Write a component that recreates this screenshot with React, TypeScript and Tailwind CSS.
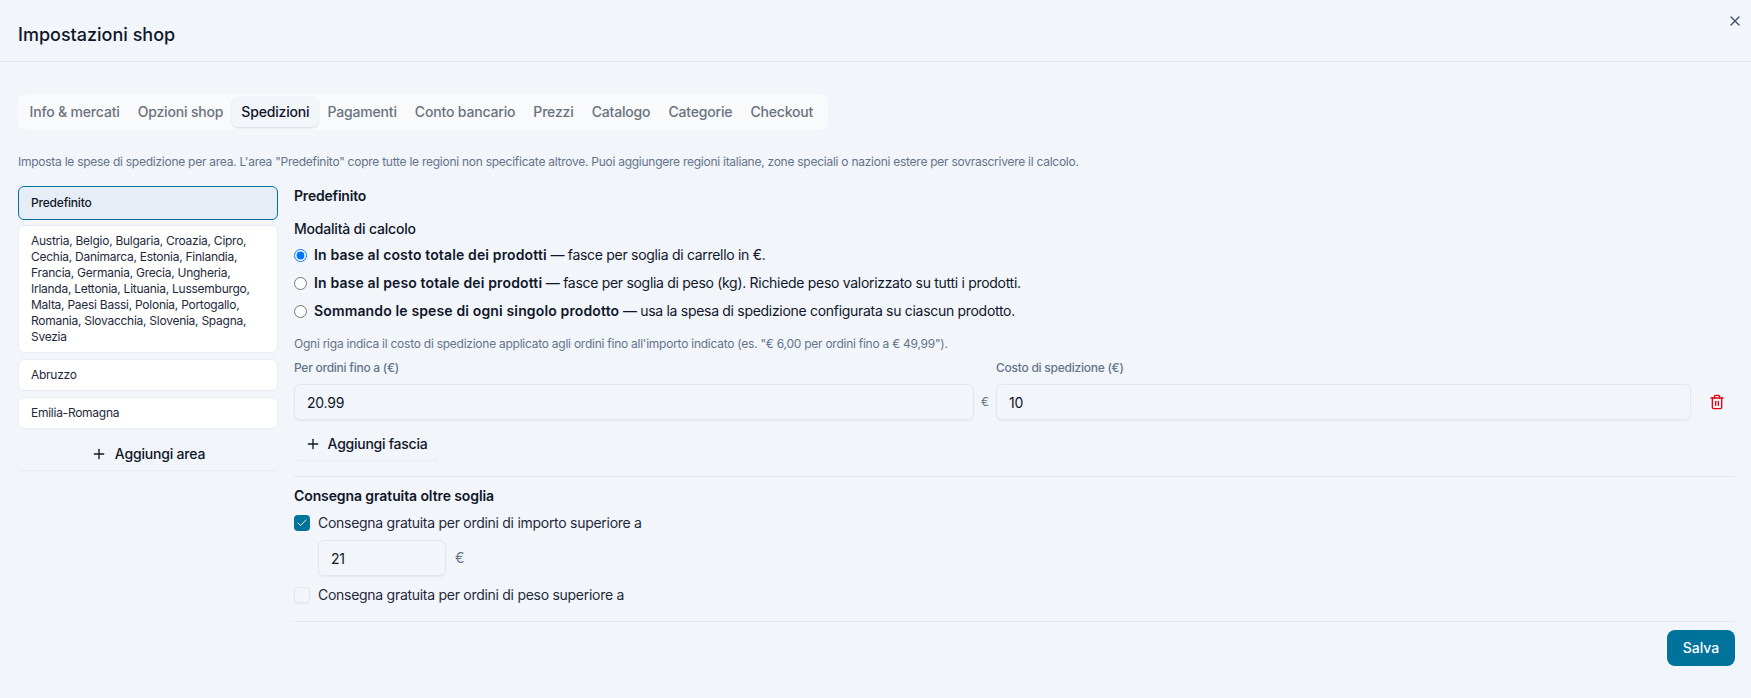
import { Check, Plus, Trash2, X } from "lucide-react";

const tabs = ["Info & mercati", "Opzioni shop", "Spedizioni", "Pagamenti", "Conto bancario", "Prezzi", "Catalogo", "Categorie", "Checkout"];

const modes = [
  { title: "In base al costo totale dei prodotti", rest: " — fasce per soglia di carrello in €.", on: true },
  { title: "In base al peso totale dei prodotti", rest: " — fasce per soglia di peso (kg). Richiede peso valorizzato su tutti i prodotti.", on: false },
  { title: "Sommando le spese di ogni singolo prodotto", rest: " — usa la spesa di spedizione configurata su ciascun prodotto.", on: false },
];

const areas = [
  "Austria, Belgio, Bulgaria, Croazia, Cipro, Cechia, Danimarca, Estonia, Finlandia, Francia, Germania, Grecia, Ungheria, Irlanda, Lettonia, Lituania, Lussemburgo, Malta, Paesi Bassi, Polonia, Portogallo, Romania, Slovacchia, Slovenia, Spagna, Svezia",
  "Abruzzo",
  "Emilia-Romagna",
];

const inputClass = "h-9 rounded-md border border-[#e2e8f0] bg-[#f2f5fa] px-3 text-sm tracking-[-0.2px] text-[#0f172a] shadow-xs outline-none";

export default function App() {
  return (
    <div className="relative h-[698px] overflow-hidden bg-[#f2f5fa] font-['Inter',sans-serif] text-[#0f172a]">
      {/* Header */}
      <div className="flex h-[62px] items-center border-b border-[#e4e9f1] px-[18px] pt-[8px]">
        <h1 className="text-lg font-medium">Impostazioni shop</h1>
      </div>
      <button className="absolute top-[13px] right-[8px] text-[#475569]">
        <X size={16} />
      </button>

      <div className="pt-[32px] pr-[16px] pl-[18px]">
        {/* Tabs */}
        <div className="flex h-9 w-fit items-center rounded-lg bg-[#f8fafc] pr-[6px] pl-[2.5px]">
          {tabs.map((t) => (
            <div
              key={t}
              className={
                t === "Spedizioni"
                  ? "flex h-[30px] items-center rounded-md bg-[#f2f5fa] px-[9px] text-sm font-medium tracking-[-0.17px] text-[#0f172a] shadow-sm"
                  : "flex h-[30px] items-center px-[9px] text-sm font-medium tracking-[-0.17px] text-[#6b7280]"
              }
            >
              {t}
            </div>
          ))}
        </div>

        <p className="mt-[24px] text-xs leading-4 tracking-[-0.26px] text-[#64748b]">
          Imposta le spese di spedizione per area. L'area "Predefinito" copre tutte le regioni non specificate altrove. Puoi aggiungere regioni italiane, zone speciali o nazioni estere per sovrascrivere il calcolo.
        </p>

        <div className="mt-[16px] flex gap-4">
          {/* Area list */}
          <div className="flex w-[260px] shrink-0 flex-col gap-[6px]">
            <div className="-mb-px flex h-[34px] items-center rounded-md border border-[#00739d] bg-[#e6edf6] px-3 text-xs font-medium tracking-[-0.2px]">Predefinito</div>
            {areas.map((a) => (
              <div key={a} className="rounded-md border border-[#e8edf3] bg-white px-3 py-[7px] text-xs leading-4 tracking-[-0.26px] text-[#1e293b]">
                {a}
              </div>
            ))}
            <button className="mt-[3px] flex h-[32px] items-center justify-center gap-2 rounded-md bg-[#f2f5fa] text-sm font-medium tracking-[-0.2px] shadow-xs">
              <Plus size={16} />
              Aggiungi area
            </button>
          </div>

          {/* Detail */}
          <div className="min-w-0 flex-1">
            <h2 className="text-sm leading-5 font-semibold tracking-[-0.2px]">Predefinito</h2>
            <p className="mt-[13px] text-sm leading-5 font-medium tracking-[-0.2px]">Modalità di calcolo</p>
            <div className="mt-[2px] flex flex-col">
              {modes.map((m) => (
                <label key={m.title} className="flex h-[28px] items-center gap-[7px] text-sm tracking-[-0.3px]">
                  <input type="radio" name="mode" defaultChecked={m.on} />
                  <span>
                    <b className="font-semibold tracking-[0.14px]">{m.title}</b>
                    {m.rest}
                  </span>
                </label>
              ))}
            </div>
            <p className="mt-[11px] text-xs leading-4 tracking-[-0.25px] text-[#64748b]">
              Ogni riga indica il costo di spedizione applicato agli ordini fino all'importo indicato (es. "€ 6,00 per ordini fino a € 49,99").
            </p>

            {/* Price bands */}
            <div className="mt-[8px] grid grid-cols-[702px_695px_44px] items-center gap-y-[8px]">
              <p className="text-xs leading-4 font-medium tracking-[-0.25px] text-[#64748b]">Per ordini fino a (€)</p>
              <p className="col-span-2 text-xs leading-4 font-medium tracking-[-0.25px] text-[#64748b]">Costo di spedizione (€)</p>
              <div className="flex items-center">
                <input className={`${inputClass} w-[680px]`} defaultValue="20.99" />
                <span className="w-[22px] text-center text-xs text-[#64748b]">€</span>
              </div>
              <input className={`${inputClass} w-full`} defaultValue="10" />
              <div className="flex justify-end pr-[10px] text-[#e7000b]">
                <Trash2 size={16} />
              </div>
            </div>

            <button className="mt-[8px] flex h-8 w-[144px] items-center justify-center gap-[7px] rounded-md bg-[#f2f5fa] text-sm font-medium tracking-[-0.25px] shadow-xs">
              <Plus size={16} />
              Aggiungi fascia
            </button>

            <div className="mt-[16px] border-t border-[#e4e9f1] pt-[9px]">
              <h3 className="text-sm leading-5 font-semibold tracking-[-0.1px]">Consegna gratuita oltre soglia</h3>
              <label className="mt-[7px] flex h-[20px] items-center gap-[8px] text-sm tracking-[-0.28px] text-[#1e293b]">
                <span className="flex size-4 items-center justify-center rounded-[4px] bg-[#00739d] text-white">
                  <Check size={12} />
                </span>
                Consegna gratuita per ordini di importo superiore a
              </label>
              <div className="mt-[7px] ml-[24px] flex items-center gap-[9px]">
                <input className={`${inputClass} w-[128px]`} defaultValue="21" />
                <span className="text-sm text-[#64748b]">€</span>
              </div>
              <label className="mt-[9px] flex h-[20px] items-center gap-[8px] text-sm tracking-[-0.28px] text-[#1e293b]">
                <span className="size-4 rounded-[4px] border border-[#e2e8f0] bg-[#f2f5fa] shadow-xs" />
                Consegna gratuita per ordini di peso superiore a
              </label>
            </div>

            <div className="mt-[16px] flex justify-end border-t border-[#e4e9f1] pt-[8px]">
              <button className="h-9 w-[68px] rounded-lg bg-[#00739d] text-sm font-medium text-white">Salva</button>
            </div>
          </div>
        </div>
      </div>
    </div>
  );
}
